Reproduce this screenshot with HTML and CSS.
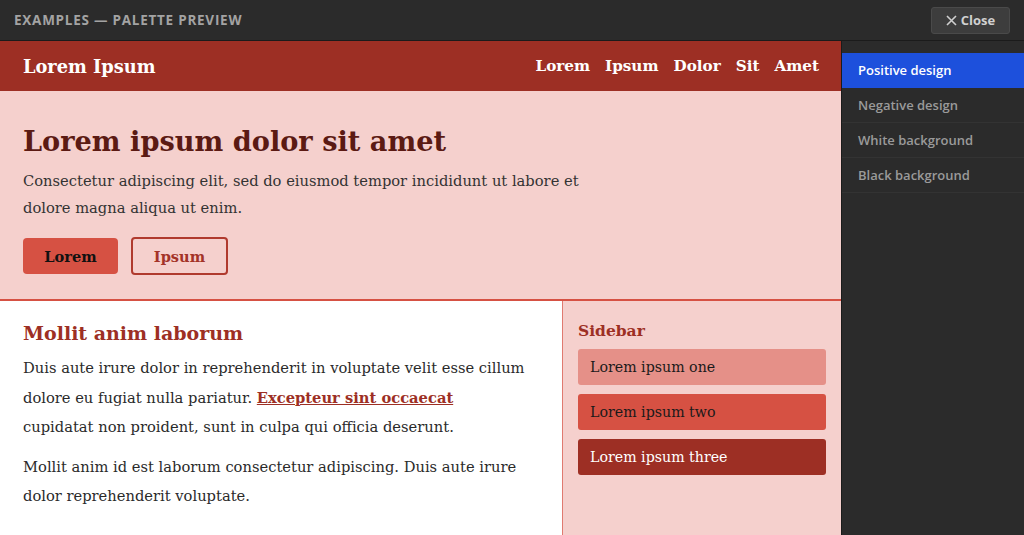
FILE: index.html
```html
<!DOCTYPE html>
<html>
<head>
<meta charset="utf-8">
<link rel="stylesheet" href="styles.css">
</head>
<body>
<div class="topbar">
  <div class="title">EXAMPLES — PALETTE PREVIEW</div>
  <button class="close"><svg width="11" height="11" viewBox="0 0 11 11"><path d="M1 1 L10 10 M10 1 L1 10" stroke="#cfcfcf" stroke-width="1.6" fill="none"/></svg>Close</button>
</div>
<div class="workspace">
  <div class="preview">
    <header class="site-header">
      <div class="brand">Lorem Ipsum</div>
      <nav class="nav"><a>Lorem</a><a>Ipsum</a><a>Dolor</a><a>Sit</a><a>Amet</a></nav>
    </header>
    <section class="hero">
      <h1>Lorem ipsum dolor sit amet</h1>
      <p>Consectetur adipiscing elit, sed do eiusmod tempor incididunt ut labore et dolore magna aliqua ut enim.</p>
      <div class="buttons">
        <span class="btn btn-fill">Lorem</span>
        <span class="btn btn-outline">Ipsum</span>
      </div>
    </section>
    <div class="main">
      <div class="content">
        <h2>Mollit anim laborum</h2>
        <p>Duis aute irure dolor in reprehenderit in voluptate velit esse cillum dolore eu fugiat nulla pariatur. <a class="link">Excepteur sint occaecat</a> cupidatat non proident, sunt in culpa qui officia deserunt.</p>
        <p>Mollit anim id est laborum consectetur adipiscing. Duis aute irure dolor reprehenderit voluptate.</p>
      </div>
      <aside class="sidebar">
        <h3>Sidebar</h3>
        <div class="item item-1">Lorem ipsum one</div>
        <div class="item item-2">Lorem ipsum two</div>
        <div class="item item-3">Lorem ipsum three</div>
      </aside>
    </div>
  </div>
  <div class="panel">
    <div class="opt active">Positive design</div>
    <div class="opt">Negative design</div>
    <div class="opt">White background</div>
    <div class="opt">Black background</div>
  </div>
</div>
</body>
</html>
```
FILE: styles.css
```css
* { box-sizing: border-box; }
html, body { margin: 0; padding: 0; }
body {
  width: 1024px;
  height: 535px;
  overflow: hidden;
  background: #2b2b2b;
  font-family: "DejaVu Serif", Georgia, serif;
}
.topbar {
  height: 41px;
  background: #2b2b2b;
  border-bottom: 1px solid #1b1b1b;
  display: flex;
  align-items: center;
  justify-content: space-between;
  padding: 0 14px 0 14px;
}
.title {
  font-family: "Open Sans", sans-serif;
  font-weight: 700;
  font-size: 13.5px;
  letter-spacing: 0.75px;
  color: #a3a3a3;
}
.close {
  font-family: "Open Sans", sans-serif;
  font-weight: 700;
  font-size: 13px;
  color: #d0d0d0;
  background: #3d3d3d;
  border: 1px solid #4a4a4a;
  border-radius: 3px;
  height: 27px;
  width: 79px;
  display: flex;
  align-items: center;
  justify-content: center;
  gap: 4px;
  padding: 0;
}
.workspace {
  display: flex;
  height: 494px;
}
.preview {
  width: 842px;
  display: flex;
  flex-direction: column;
  background: #ffffff;
  border-right: 1px solid #1b1b1b;
  flex: none;
}
.site-header {
  height: 50px;
  background: #9d2f24;
  display: flex;
  align-items: center;
  justify-content: space-between;
  padding: 0 22px 0 23px;
  color: #fff;
}
.brand { font-weight: 700; font-size: 17.8px; }
.nav { display: flex; gap: 15px; }
.nav a { font-weight: 700; font-size: 15.2px; color: #fff; }
.hero {
  background: #f5d0cd;
  padding: 32px 23px 24px;
  border-bottom: 2px solid #d65143;
}
.hero h1 {
  margin: 0;
  font-size: 27.2px;
  line-height: 36px;
  color: #5b1a13;
  font-weight: 700;
}
.hero p {
  margin: 8px 0 0;
  max-width: 580px;
  font-size: 14.7px;
  line-height: 27px;
  color: #333;
}
.buttons { display: flex; gap: 13px; margin-top: 16px; align-items: center; }
.btn {
  display: flex;
  align-items: center;
  justify-content: center;
  font-weight: 700;
  font-size: 14.6px;
  border-radius: 4px;
}
.btn-fill { width: 95px; height: 36px; background: #d65143; color: #111; }
.btn-outline { width: 97px; height: 38px; border: 2px solid #b03a2e; color: #a33328; }
.main { display: flex; flex: 1; }
.content {
  width: 562px;
  padding: 20px 36px 0 23px;
  background: #fff;
}
.content h2 {
  margin: 0;
  font-size: 19px;
  line-height: 24px;
  color: #9d2f24;
}
.content p {
  margin: 8px 0 0;
  font-size: 14.7px;
  line-height: 29.5px;
  color: #2a2a2a;
}
.content p + p { margin-top: 10px; }
.link { color: #9d2f24; font-weight: 700; text-decoration: underline; }
.sidebar {
  flex: 1;
  background: #f5d0cd;
  border-left: 1px solid #e07a70;
  padding: 20px 15px 0 15px;
  display: flex;
  flex-direction: column;
  gap: 9px;
}
.sidebar h3 {
  margin: 0 0 -1px;
  font-size: 15.5px;
  line-height: 20px;
  color: #9d2f24;
}
.item {
  height: 36px;
  border-radius: 3px;
  display: flex;
  align-items: center;
  padding-left: 12px;
  font-size: 14.2px;
  color: #1a1a1a;
}
.item-1 { background: #e59088; }
.item-2 { background: #d65143; }
.item-3 { background: #9d2f24; color: #fff; }
.panel {
  flex: 1;
  padding-top: 12px;
  background: #2b2b2b;
}
.opt {
  height: 35px;
  display: flex;
  align-items: center;
  padding-left: 16px;
  font-family: "Open Sans", sans-serif;
  font-weight: 600;
  font-size: 13px;
  color: #9a9a9a;
  border-bottom: 1px solid #333333;
}
.opt.active { background: #1d50dc; color: #fff; border-bottom-color: #1d50dc; }
```
